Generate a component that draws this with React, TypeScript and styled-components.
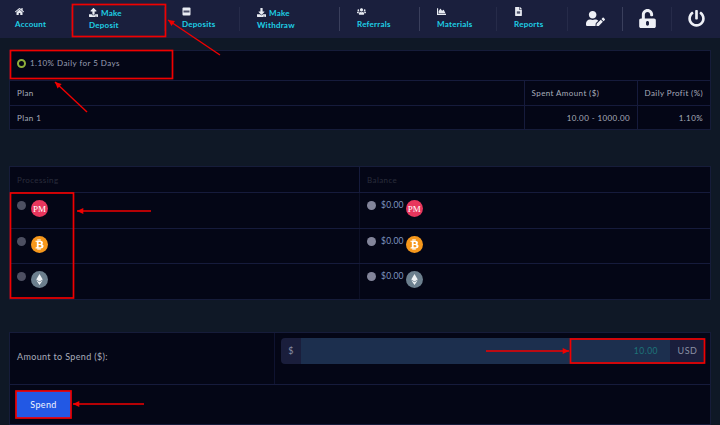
import React from 'react';
import styled, { createGlobalStyle } from 'styled-components';
import {
  FaHome,
  FaUpload,
  FaDownload,
  FaUsers,
  FaChartArea,
  FaFileAlt,
  FaUserEdit,
  FaUnlockAlt,
  FaPowerOff,
  FaBtc,
  FaEthereum,
} from 'react-icons/fa';

const GlobalStyle = createGlobalStyle`
  html, body {
    margin: 0;
    padding: 0;
    background: #0f1826;
  }
  body {
    font-family: "Lato", "Open Sans", sans-serif;
    overflow: hidden;
  }
`;

const Page = styled.div`
  position: relative;
  width: 720px;
  height: 425px;
  overflow: hidden;
`;

const Nav = styled.nav`
  display: flex;
  height: 38px;
  background: #1a1f3d;
`;

const NavItem = styled.a<{ $width: number; $pad?: number; $bright?: boolean }>`
  box-sizing: border-box;
  width: ${(p) => p.$width}px;
  height: 24px;
  margin-top: 7px;
  padding-left: ${(p) => p.$pad ?? 17}px;
  border-right: 1px solid ${(p) => (p.$bright ? '#3a3f5c' : '#262b49')};
  color: #1ed0e6;
  font-size: 8px;
  font-weight: 700;
  letter-spacing: 0.25px;
  line-height: 12px;
  white-space: nowrap;

  > svg {
    display: block;
    margin-bottom: 2px;
    color: #e8ebf2;
    font-size: 9px;
  }
`;

const InlineIcon = styled.span`
  display: inline-block;
  height: 9px;
  margin: 1px 3px 0 0;
  color: #e8ebf2;
  font-size: 9px;
  line-height: 0;
  vertical-align: top;
`;

const NavAction = styled.a<{ $width: number; $bright?: boolean; $last?: boolean }>`
  box-sizing: border-box;
  display: flex;
  align-items: center;
  justify-content: center;
  width: ${(p) => p.$width}px;
  height: 24px;
  margin-top: 7px;
  padding-bottom: 2px;
  border-right: ${(p) => (p.$last ? 'none' : `1px solid ${p.$bright ? '#3a3f5c' : '#262b49'}`)};
  color: #eef0f6;
  font-size: ${(p) => (p.$last ? 17 : 19)}px;
`;

const Content = styled.main`
  display: flex;
  flex-direction: column;
  padding: 12px 9px 0 9px;
`;

const Panel = styled.section<{ $gap?: number }>`
  margin-bottom: ${(p) => p.$gap ?? 0}px;
  background: #040616;
  border: 1px solid #161c3a;
`;

const Row = styled.div<{ $height: number; $last?: boolean }>`
  display: flex;
  height: ${(p) => p.$height}px;
  border-bottom: ${(p) => (p.$last ? 'none' : '1px solid #161b3c')};
`;

const Cell = styled.div<{ $width?: number; $right?: boolean; $dim?: boolean }>`
  box-sizing: border-box;
  flex: ${(p) => (p.$width ? `0 0 ${p.$width}px` : '1 1 0')};
  display: flex;
  align-items: center;
  justify-content: ${(p) => (p.$right ? 'flex-end' : 'flex-start')};
  padding: 0 7px;
  color: ${(p) => (p.$dim ? '#2a2d3c' : '#a9adbb')};
  font-size: 8px;
  letter-spacing: 0.4px;
  white-space: nowrap;
  border-left: ${(p) => (p.$width ? '1px solid #161b3c' : 'none')};
`;

const LabelCell = styled.div`
  box-sizing: border-box;
  flex: 0 0 264px;
  display: flex;
  align-items: center;
  padding: 0 0 4px 7px;
  color: #a9adbb;
  font-size: 9px;
  letter-spacing: 0.35px;
`;

const InputCell = styled.div`
  flex: 1 1 0;
  border-left: 1px solid #0f1330;
`;

const PlanTitle = styled.div`
  box-sizing: border-box;
  display: flex;
  align-items: center;
  gap: 4px;
  height: 30px;
  padding: 0 0 5px 7px;
  color: #9a9fb4;
  font-size: 8px;
  letter-spacing: 0.45px;
  border-bottom: 1px solid #161b3c;
`;

const RingRadio = styled.span`
  box-sizing: border-box;
  width: 9px;
  height: 9px;
  border: 2px solid #8fb03a;
  border-radius: 50%;
`;

const OptionCell = styled.div<{ $width?: number; $divided?: boolean }>`
  box-sizing: border-box;
  flex: ${(p) => (p.$width ? `0 0 ${p.$width}px` : '1 1 0')};
  display: flex;
  align-items: flex-start;
  padding: 7px 0 0 7px;
  border-left: ${(p) => (p.$divided ? '1px solid #0d1026' : 'none')};
`;

const Dot = styled.span<{ $light?: boolean }>`
  flex: none;
  width: 9px;
  height: 9px;
  margin-top: 1px;
  margin-right: 5px;
  border-radius: 50%;
  background: ${(p) => (p.$light ? '#83859a' : '#4d4f61')};
`;

const Coin = styled.span<{ $bg: string }>`
  flex: none;
  display: flex;
  align-items: center;
  justify-content: center;
  width: 17px;
  height: 17px;
  border-radius: 50%;
  background: ${(p) => p.$bg};
  color: #fff;
  font-family: "Liberation Serif", serif;
  font-size: 9px;
  overflow: hidden;
`;

const Money = styled.span`
  margin: 0 2px 0 0;
  color: #7f95c0;
  font-size: 8.5px;
  line-height: 11px;
  letter-spacing: 0.2px;
`;

const InputGroup = styled.div`
  display: flex;
  width: 424px;
  height: 26px;
  margin: 5px 0 0 6px;
  color: #8b90a4;
  font-size: 9px;
`;

const Addon = styled.span<{ $width: number; $round: 'left' | 'right' }>`
  flex: 0 0 ${(p) => p.$width}px;
  display: flex;
  align-items: center;
  justify-content: center;
  background: #1a1e3c;
  border-radius: ${(p) => (p.$round === 'left' ? '4px 0 0 4px' : '0 4px 4px 0')};
  letter-spacing: 0.5px;
`;

const AmountInput = styled.input`
  box-sizing: border-box;
  flex: 1;
  min-width: 0;
  padding: 0 12px 0 0;
  background: #1c2f4e;
  border: none;
  outline: none;
  color: #1d7479;
  font-family: inherit;
  font-size: 8.5px;
  letter-spacing: 0.5px;
  text-align: right;
`;

const SpendButton = styled.button`
  width: 55px;
  height: 27px;
  margin: 6px 0 0 6px;
  background: #2258e4;
  border: none;
  border-radius: 2px;
  color: #f2f5ff;
  font-family: inherit;
  font-size: 9px;
  letter-spacing: 0.35px;
`;

const Annotations = styled.svg`
  position: absolute;
  top: 0;
  left: 0;
  pointer-events: none;
`;

const BOXES = [
  [72.5, 4.5, 93, 32],
  [10.5, 50.5, 162, 28],
  [10.5, 193, 63, 105],
  [570.5, 339, 134, 24],
  [16, 391, 55, 27],
];

const ARROWS = [
  { from: [220, 55], to: [168, 20] },
  { from: [87, 112], to: [55, 82] },
  { from: [151, 211], to: [77, 211] },
  { from: [486, 351], to: [569, 351] },
  { from: [144, 404], to: [73, 404] },
];

function arrowHead(from: number[], to: number[]) {
  const angle = Math.atan2(to[1] - from[1], to[0] - from[0]);
  const size = 7;
  const spread = 0.45;
  const a = [to[0] - size * Math.cos(angle - spread), to[1] - size * Math.sin(angle - spread)];
  const b = [to[0] - size * Math.cos(angle + spread), to[1] - size * Math.sin(angle + spread)];
  return `${to[0]},${to[1]} ${a[0]},${a[1]} ${b[0]},${b[1]}`;
}

const DepositsIcon = () => (
  <svg width="9" height="9" viewBox="0 0 9 9">
    <rect x="0.5" y="0.5" width="8" height="8" rx="1" fill="#e8ebf2" />
    <rect x="1.5" y="3.5" width="6" height="2" fill="#4a4e68" />
  </svg>
);

const PmCoin = () => <Coin $bg="#e8365d">PM</Coin>;

const BtcCoin = () => (
  <Coin $bg="#f7981c">
    <FaBtc size={11} color="#ffffff" />
  </Coin>
);

const EthCoin = () => (
  <Coin $bg="#6c7f8e">
    <FaEthereum size={11} color="#eef1f4" />
  </Coin>
);

const COINS = [PmCoin, BtcCoin, EthCoin];

export default function App() {
  return (
    <Page>
      <GlobalStyle />
      <Nav>
        <NavItem $width={72} $pad={15}>
          <FaHome />
          Account
        </NavItem>
        <NavItem $width={93}>
          <InlineIcon><FaUpload /></InlineIcon>
          Make
          <br />
          Deposit
        </NavItem>
        <NavItem $width={75}>
          <DepositsIcon />
          Deposits
        </NavItem>
        <NavItem $width={100} $bright>
          <InlineIcon><FaDownload /></InlineIcon>
          Make
          <br />
          Withdraw
        </NavItem>
        <NavItem $width={80} $bright>
          <FaUsers />
          Referrals
        </NavItem>
        <NavItem $width={77}>
          <FaChartArea />
          Materials
        </NavItem>
        <NavItem $width={71}>
          <FaFileAlt />
          Reports
        </NavItem>
        <NavAction $width={55} $bright>
          <FaUserEdit />
        </NavAction>
        <NavAction $width={49}>
          <FaUnlockAlt />
        </NavAction>
        <NavAction $width={48} $last>
          <FaPowerOff />
        </NavAction>
      </Nav>

      <Content>
        <Panel $gap={36}>
          <PlanTitle>
            <RingRadio />
            1.10% Daily for 5 Days
          </PlanTitle>
          <Row $height={24}>
            <Cell>Plan</Cell>
            <Cell $width={113}>Spent Amount ($)</Cell>
            <Cell $width={73}>Daily Profit (%)</Cell>
          </Row>
          <Row $height={23} $last>
            <Cell>Plan 1</Cell>
            <Cell $width={113} $right>10.00 - 1000.00</Cell>
            <Cell $width={73} $right>1.10%</Cell>
          </Row>
        </Panel>

        <Panel $gap={32}>
          <Row $height={25}>
            <Cell $dim>Processing</Cell>
            <Cell $dim $width={351}>Balance</Cell>
          </Row>
          {COINS.map((CoinIcon, i) => (
            <Row key={i} $height={34.5} $last={i === COINS.length - 1}>
              <OptionCell>
                <Dot />
                <CoinIcon />
              </OptionCell>
              <OptionCell $width={351} $divided>
                <Dot $light />
                <Money>$0.00</Money>
                <CoinIcon />
              </OptionCell>
            </Row>
          ))}
        </Panel>

        <Panel>
          <Row $height={51}>
            <LabelCell>Amount to Spend ($):</LabelCell>
            <InputCell>
              <InputGroup>
                <Addon $width={20} $round="left">$</Addon>
                <AmountInput defaultValue="10.00" />
                <Addon $width={35} $round="right">USD</Addon>
              </InputGroup>
            </InputCell>
          </Row>
          <Row $height={39} $last>
            <SpendButton>Spend</SpendButton>
          </Row>
        </Panel>
      </Content>

      <Annotations width={720} height={425} viewBox="0 0 720 425">
        {BOXES.map(([x, y, w, h], i) => (
          <rect key={i} x={x} y={y} width={w} height={h} fill="none" stroke="#f00000" strokeWidth={1.7} />
        ))}
        {ARROWS.map(({ from, to }, i) => (
          <g key={i}>
            <line x1={from[0]} y1={from[1]} x2={to[0]} y2={to[1]} stroke="#f00000" strokeWidth={1.4} />
            <polygon points={arrowHead(from, to)} fill="#f00000" />
          </g>
        ))}
      </Annotations>
    </Page>
  );
}
